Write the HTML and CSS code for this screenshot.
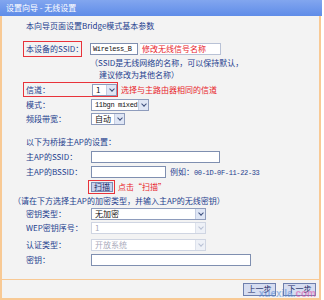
FILE: index.html
```html
<!DOCTYPE html>
<html>
<head>
<meta charset="utf-8">
<link rel="stylesheet" href="styles.css">
</head>
<body>
<div class="win">
  <div class="titlebar">设置向导 - 无线设置</div>
  <div class="body">
    <div class="row intro">本向导页面设置Bridge模式基本参数</div>
    <div class="row ssid">
      <span class="redbox lab">本设备的SSID：</span>
      <span class="input w-ssid mono">Wireless_B</span>
      <span class="tip">修改无线信号名称</span>
    </div>
    <div class="row note n1">（SSID是无线网络的名称，可以保持默认，</div>
    <div class="row note n2">建议修改为其他名称）</div>
    <div class="row chan">
      <span class="redbox chanbox"><span class="lab2">信道：</span><span class="select w-ch"><span class="val">1</span><span class="arrow"></span></span></span>
      <span class="redtext">选择与主路由器相同的信道</span>
    </div>
    <div class="row field mode"><span class="label">模式：</span><span class="select w-mode"><span class="val mono">11bgn mixed</span><span class="arrow"></span></span></div>
    <div class="row field band"><span class="label">频段带宽：</span><span class="select w-band"><span class="val">自动</span><span class="arrow"></span></span></div>
    <div class="row bridge">以下为桥接主AP的设置：</div>
    <div class="row field apssid"><span class="label">主AP的SSID：</span><span class="input w-ap"></span></div>
    <div class="row field apbssid"><span class="label">主AP的BSSID：</span><span class="input w-bssid"></span><span class="eg">例如：<span class="mono">00-1D-0F-11-22-33</span></span></div>
    <div class="row field scan"><span class="label"></span><span class="redbox scanbox"><span class="btn">扫描</span></span><span class="redtext">点击“扫描”</span></div>
    <div class="row note2">（请在下方选择主AP的加密类型，并输入主AP的无线密钥）</div>
    <div class="row field ktype"><span class="label">密钥类型：</span><span class="select w-key"><span class="val">无加密</span><span class="arrow"></span></span></div>
    <div class="row field wep"><span class="label">WEP密钥序号：</span><span class="select w-key dis"><span class="val">1</span><span class="arrow"></span></span></div>
    <div class="row field auth"><span class="label">认证类型：</span><span class="select w-key dis"><span class="val">开放系统</span><span class="arrow"></span></span></div>
    <div class="row field key"><span class="label">密钥：</span><span class="input w-pw"></span></div>
  </div>
  <div class="footer">
    <span class="fbtn">上一步</span>
    <span class="fbtn">下一步</span>
  </div>
  <span class="wm"><span class="wm1">xuexila.</span><span class="wm2">com</span></span>
</div>
</body>
</html>
```
FILE: styles.css
```css
* { box-sizing: border-box; }
html, body { margin: 0; padding: 0; background: #ffffff; }
body {
  width: 324px; height: 300px; overflow: hidden;
  font-family: "Noto Sans CJK SC", "Noto Sans", sans-serif;
  font-size: 8px; line-height: 1;
  color: #24408e;
}
.win {
  position: relative;
  width: 322px; height: 300px;
  display: flex; flex-direction: column;
}
.titlebar {
  height: 16px;
  background: linear-gradient(#82a6ef, #5f8ce8);
  color: #ffffff;
  padding-left: 6px;
  display: flex; align-items: center;
  font-size: 8px;
}
.body {
  flex: 1;
  background: #f3f3f3;
  border-left: 2px solid #f8c994;
  border-right: 2px solid #f8c994;
  width: 321px;
  padding-left: 21px;
  display: flex; flex-direction: column;
}
.row { display: flex; align-items: center; white-space: nowrap; }
.row > * { flex: none; white-space: nowrap; }
.intro { margin-top: 4px; height: 12px; padding-left: 3px; }
.ssid { margin-top: 9px; height: 16px; }
.redbox { border: 1px solid #e8333a; display: flex; align-items: center; }
.lab { width: 59px; height: 16px; padding-left: 2px; }
.input {
  background: #fff; border: 1px solid #7f8fb0;
  height: 12px; display: flex; align-items: center; padding-left: 3px;
  color: #111;
}
.mono { font-family: "Liberation Mono", monospace; font-size: 7px; letter-spacing: -0.35px; }
.w-ssid { width: 48px; margin-left: 8px; padding-left: 2px; }
.tip {
  margin-left: 2px; width: 81px; height: 12px;
  background: #fff; border: 1px solid #b9c2d6; border-left: none;
  color: #e8232b; display: flex; align-items: center; padding-left: 2px;
}
.note { height: 12px; }
.n1 { padding-left: 67px; }
.n2 { padding-left: 76px; }
.chan { margin-top: 1px; height: 15px; }
.chanbox { width: 95px; height: 15px; padding-left: 2px; }
.lab2 { width: 66px; flex: none; }
.redtext { color: #e8232b; margin-left: 3px; }
.select {
  background: #fff; border: 1px solid #8e9cbc;
  height: 12px; display: flex; align-items: center; justify-content: space-between;
  padding-left: 3px; color: #111; white-space: nowrap;
}
.select .val { flex: 1; white-space: nowrap; }
.arrow {
  flex: none;
  width: 10px; height: 10px; background: #dfe6f5; border-left: 1px solid #c4cde2;
  position: relative;
}
.arrow::after {
  content: ""; position: absolute; left: 3px; top: 2px;
  width: 3px; height: 3px; border-right: 1.2px solid #3d4f7c; border-bottom: 1.2px solid #3d4f7c;
  transform: rotate(45deg);
}
.dis { border-color: #cfd5e2; color: #aab; }
.dis .arrow { background: #eef1f7; border-left-color: #dde2ec; }
.dis .arrow::after { border-color: #b8c0d4; }
.field { height: 12px; }
.label { width: 68px; padding-left: 3px; }
.w-ch { width: 25px; }
.mode { margin-top: 1px; height: 14px; }
.w-mode { width: 58px; }
.band { margin-top: 1px; }
.w-band { width: 34px; }
.bridge { margin-top: 11px; height: 12px; padding-left: 3px; }
.apssid { margin-top: 3px; }
.w-ap { width: 129px; }
.apbssid { margin-top: 3px; }
.w-bssid { width: 75px; }
.eg { margin-left: 4px; color: #24408e; }
.eg .mono { color: #24408e; }
.scan { margin-top: 2px; height: 14px; }
.scan .label { width: 65px; }
.scanbox { width: 27px; height: 14px; padding: 1px; }
.btn {
  width: 23px; height: 10px; background: #c9d2ec; border: 1px solid #7c8bb4;
  display: flex; align-items: center; justify-content: center; color: #1a2a66; margin-left: 1px;
}
.note2 { margin-top: 1px; height: 12px; margin-left: -10px; }
.ktype { margin-top: 1px; }
.w-key { width: 115px; }
.wep { margin-top: 2px; }
.auth { margin-top: 5px; }
.key { margin-top: 3px; }
.w-pw { width: 160px; }
.footer {
  height: 21px;
  background: #f3f3f3;
  border: 2px solid #f8c994;
  border-top: 1px solid #f8c994;
  width: 321px;
  display: flex; justify-content: flex-end; align-items: center;
  gap: 7px; padding-right: 3px;
}
.fbtn {
  width: 33px; height: 13px; background: #d6ddf0; border: 1px solid #6f80ad;
  display: flex; align-items: center; justify-content: center; color: #1a2a66;
}
.wm {
  position: absolute; right: 6px; bottom: 1px;
  font-family: "Liberation Sans", sans-serif; font-size: 10px; line-height: 11px; font-weight: bold;
  opacity: 0.5; pointer-events: none;
}
.wm1 { color: #4a7fd0; }
.wm2 { color: #e040a0; }
```
